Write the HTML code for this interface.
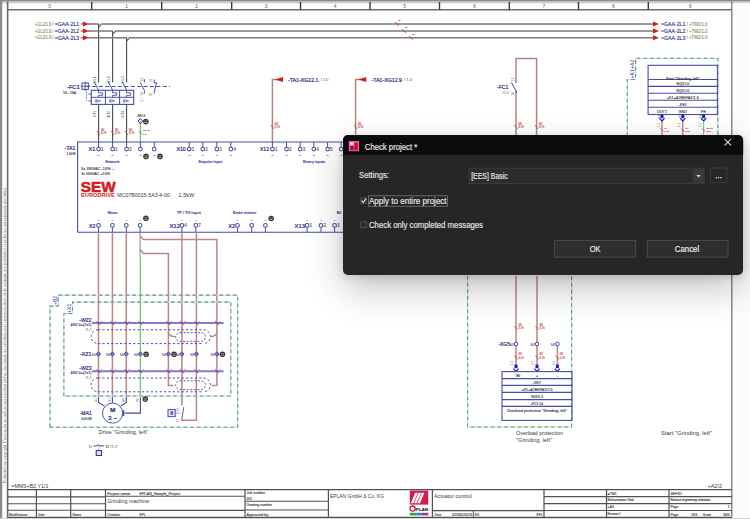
<!DOCTYPE html>
<html><head><meta charset="utf-8"><title>EPLAN Check project</title><style>
html,body{margin:0;padding:0;background:#fff;width:750px;height:519px;overflow:hidden;}
svg{position:absolute;left:0;top:0;}
svg text{font-family:"Liberation Sans",sans-serif;}
#dlg{position:absolute;left:343px;top:135.3px;width:400.2px;height:140.2px;border-radius:5px;background:#262626;box-shadow:0 14px 36px rgba(0,0,0,0.24),0 2px 8px rgba(0,0,0,0.14);}
</style></head>
<body>
<svg width="750" height="519" viewBox="0 0 750 519">
<rect x="0" y="0" width="750" height="1.6" fill="#8a8a8a"/>
<rect x="0" y="1.6" width="750" height="1.7" fill="#cdcdcd"/>
<rect x="0" y="0" width="2.2" height="519" fill="#8a8a8a"/>
<rect x="0" y="517.8" width="750" height="1.2" fill="#d4d4d4"/>
<rect x="732.6" y="3.3" width="17.4" height="514.7" fill="#fcfcfc"/>
<line x1="7.6" y1="9.7" x2="731.8" y2="9.7" stroke="#6e6e6e" stroke-width="1.5" />
<line x1="7.6" y1="1.6" x2="7.6" y2="518" stroke="#6a6a6a" stroke-width="1.6" />
<line x1="731.8" y1="1.6" x2="731.8" y2="517.4" stroke="#666" stroke-width="1.15" />
<line x1="91.7" y1="2" x2="91.7" y2="9.7" stroke="#3a3a3a" stroke-width="1.4" />
<line x1="161.7" y1="2" x2="161.7" y2="9.7" stroke="#3a3a3a" stroke-width="1.4" />
<line x1="231.7" y1="2" x2="231.7" y2="9.7" stroke="#3a3a3a" stroke-width="1.4" />
<line x1="300.5" y1="2" x2="300.5" y2="9.7" stroke="#3a3a3a" stroke-width="1.4" />
<line x1="370" y1="2" x2="370" y2="9.7" stroke="#3a3a3a" stroke-width="1.4" />
<line x1="439.5" y1="2" x2="439.5" y2="9.7" stroke="#3a3a3a" stroke-width="1.4" />
<line x1="509.3" y1="2" x2="509.3" y2="9.7" stroke="#3a3a3a" stroke-width="1.4" />
<line x1="578.5" y1="2" x2="578.5" y2="9.7" stroke="#3a3a3a" stroke-width="1.4" />
<line x1="648.3" y1="2" x2="648.3" y2="9.7" stroke="#3a3a3a" stroke-width="1.4" />
<text x="49.65" y="8" font-size="5" fill="#666" text-anchor="middle" font-weight="normal" >0</text>
<text x="126.69999999999999" y="8" font-size="5" fill="#666" text-anchor="middle" font-weight="normal" >1</text>
<text x="196.7" y="8" font-size="5" fill="#666" text-anchor="middle" font-weight="normal" >2</text>
<text x="266.1" y="8" font-size="5" fill="#666" text-anchor="middle" font-weight="normal" >3</text>
<text x="335.25" y="8" font-size="5" fill="#666" text-anchor="middle" font-weight="normal" >4</text>
<text x="404.75" y="8" font-size="5" fill="#666" text-anchor="middle" font-weight="normal" >5</text>
<text x="474.4" y="8" font-size="5" fill="#666" text-anchor="middle" font-weight="normal" >6</text>
<text x="543.9" y="8" font-size="5" fill="#666" text-anchor="middle" font-weight="normal" >7</text>
<text x="613.4" y="8" font-size="5" fill="#666" text-anchor="middle" font-weight="normal" >8</text>
<text x="690.05" y="8" font-size="5" fill="#666" text-anchor="middle" font-weight="normal" >9</text>
<text transform="translate(5.8,483) rotate(-90)" font-size="3.3" fill="#666" textLength="296" lengthAdjust="spacingAndGlyphs">Protected by copyright. Passing on as well as reproduction of this document, its utilization and communication of its contents are prohibited in as far as not expressly permitted.</text>
<path d="M88,23.9 H98.6 M98.6,27.099999999999998 L101.6,23.9 H653" stroke="#7a7a7a" stroke-width="1.45" fill="none" />
<line x1="98.6" y1="23.9" x2="98.6" y2="82.5" stroke="#4a4a4a" stroke-width="1.1" />
<path d="M83,21.4 L89,23.9 L83,26.4 Z" fill="#d41c1c"/>
<line x1="80.8" y1="23.9" x2="84" y2="23.9" stroke="#d41c1c" stroke-width="1.1" />
<path d="M653,21.4 L659,23.9 L653,26.4 Z" fill="#d41c1c"/>
<text x="53.4" y="25.5" font-size="4.6" fill="#8a9466" text-anchor="end" font-weight="normal" textLength="18.6" lengthAdjust="spacingAndGlyphs" stroke="#8a9466" stroke-width="0.12">+GL2/1.9 /</text>
<text x="54.8" y="25.9" font-size="5.6" fill="#30308a" text-anchor="start" font-weight="normal" textLength="24.4" lengthAdjust="spacingAndGlyphs" stroke="#30308a" stroke-width="0.15">=GAA-2L1</text>
<text x="661" y="25.9" font-size="5.6" fill="#30308a" text-anchor="start" font-weight="normal" textLength="24.4" lengthAdjust="spacingAndGlyphs" stroke="#30308a" stroke-width="0.15">=GAA-2L1</text>
<text x="686.5" y="25.5" font-size="4.6" fill="#8a9466" text-anchor="start" font-weight="normal" textLength="21" lengthAdjust="spacingAndGlyphs" stroke="#8a9466" stroke-width="0.12">/ +TM2/1.0</text>
<path d="M88,31 H112.6 M112.6,34.2 L115.6,31 H653" stroke="#7a7a7a" stroke-width="1.45" fill="none" />
<line x1="112.6" y1="31" x2="112.6" y2="82.5" stroke="#4a4a4a" stroke-width="1.1" />
<path d="M83,28.5 L89,31 L83,33.5 Z" fill="#d41c1c"/>
<line x1="80.8" y1="31" x2="84" y2="31" stroke="#d41c1c" stroke-width="1.1" />
<path d="M653,28.5 L659,31 L653,33.5 Z" fill="#d41c1c"/>
<text x="53.4" y="32.6" font-size="4.6" fill="#8a9466" text-anchor="end" font-weight="normal" textLength="18.6" lengthAdjust="spacingAndGlyphs" stroke="#8a9466" stroke-width="0.12">+GL2/1.9 /</text>
<text x="54.8" y="33" font-size="5.6" fill="#30308a" text-anchor="start" font-weight="normal" textLength="24.4" lengthAdjust="spacingAndGlyphs" stroke="#30308a" stroke-width="0.15">=GAA-2L2</text>
<text x="661" y="33" font-size="5.6" fill="#30308a" text-anchor="start" font-weight="normal" textLength="24.4" lengthAdjust="spacingAndGlyphs" stroke="#30308a" stroke-width="0.15">=GAA-2L2</text>
<text x="686.5" y="32.6" font-size="4.6" fill="#8a9466" text-anchor="start" font-weight="normal" textLength="21" lengthAdjust="spacingAndGlyphs" stroke="#8a9466" stroke-width="0.12">/ +TM2/1.0</text>
<path d="M88,37.8 H126.6 M126.6,41.0 L129.6,37.8 H653" stroke="#7a7a7a" stroke-width="1.45" fill="none" />
<line x1="126.6" y1="37.8" x2="126.6" y2="82.5" stroke="#4a4a4a" stroke-width="1.1" />
<path d="M83,35.3 L89,37.8 L83,40.3 Z" fill="#d41c1c"/>
<line x1="80.8" y1="37.8" x2="84" y2="37.8" stroke="#d41c1c" stroke-width="1.1" />
<path d="M653,35.3 L659,37.8 L653,40.3 Z" fill="#d41c1c"/>
<text x="53.4" y="39.4" font-size="4.6" fill="#8a9466" text-anchor="end" font-weight="normal" textLength="18.6" lengthAdjust="spacingAndGlyphs" stroke="#8a9466" stroke-width="0.12">+GL2/1.9 /</text>
<text x="54.8" y="39.8" font-size="5.6" fill="#30308a" text-anchor="start" font-weight="normal" textLength="24.4" lengthAdjust="spacingAndGlyphs" stroke="#30308a" stroke-width="0.15">=GAA-2L3</text>
<text x="661" y="39.8" font-size="5.6" fill="#30308a" text-anchor="start" font-weight="normal" textLength="24.4" lengthAdjust="spacingAndGlyphs" stroke="#30308a" stroke-width="0.15">=GAA-2L3</text>
<text x="686.5" y="39.4" font-size="4.6" fill="#8a9466" text-anchor="start" font-weight="normal" textLength="21" lengthAdjust="spacingAndGlyphs" stroke="#8a9466" stroke-width="0.12">/ +TM2/1.0</text>
<line x1="395" y1="22.099999999999998" x2="399" y2="25.7" stroke="#c04040" stroke-width="0.9" />
<text x="398" y="20.9" font-size="2.4" fill="#c04848" text-anchor="start" font-weight="normal" stroke="#c04848" stroke-width="0.12">3x</text>
<line x1="402" y1="29.2" x2="406" y2="32.8" stroke="#c04040" stroke-width="0.9" />
<text x="405" y="28" font-size="2.4" fill="#c04848" text-anchor="start" font-weight="normal" stroke="#c04848" stroke-width="0.12">3x</text>
<line x1="409" y1="36.0" x2="413" y2="39.599999999999994" stroke="#c04040" stroke-width="0.9" />
<text x="412" y="34.8" font-size="2.4" fill="#c04848" text-anchor="start" font-weight="normal" stroke="#c04848" stroke-width="0.12">3x</text>
<rect x="91.3" y="90.3" width="42.4" height="14.1" stroke="#4a4aa8" stroke-width="1.1" fill="none" />
<line x1="91.3" y1="97.3" x2="133.7" y2="97.3" stroke="#4a4aa8" stroke-width="1" />
<line x1="105.4" y1="90.3" x2="105.4" y2="104.4" stroke="#4a4aa8" stroke-width="1" />
<line x1="119.6" y1="90.3" x2="119.6" y2="104.4" stroke="#4a4aa8" stroke-width="1" />
<line x1="94.19999999999999" y1="81.9" x2="98.5" y2="89.9" stroke="#3a3a8a" stroke-width="0.9" />
<path d="M98.5,90.3 V92.8 H102.6 V95.3 H98.5 V97.3" stroke="#4a4aa8" stroke-width="0.9" fill="none" />
<path d="M95.6,99.5 V102.3 M96.6,99.6 L100.6,100.9 L96.6,102.2 Z" stroke="#4a4aa8" stroke-width="0.7" fill="none" />
<line x1="98.6" y1="104.4" x2="98.6" y2="142" stroke="#4a4a4a" stroke-width="1.1" />
<line x1="97.0" y1="131" x2="100.19999999999999" y2="135" stroke="#c04040" stroke-width="0.8" />
<text x="101.0" y="130.6" font-size="2.7" fill="#c04848" text-anchor="start" font-weight="normal" stroke="#c04848" stroke-width="0.12">0V</text>
<text x="101.0" y="134.2" font-size="2.7" fill="#c04848" text-anchor="start" font-weight="normal" stroke="#c04848" stroke-width="0.12">0,75</text>
<text transform="translate(96.39999999999999,83) rotate(-90)" font-size="3.4" fill="#444" textLength="6.5" lengthAdjust="spacingAndGlyphs">1/L1</text>
<text transform="translate(96.39999999999999,117.5) rotate(-90)" font-size="3.4" fill="#444" textLength="6.5" lengthAdjust="spacingAndGlyphs">2/T1</text>
<line x1="108.19999999999999" y1="81.9" x2="112.5" y2="89.9" stroke="#3a3a8a" stroke-width="0.9" />
<path d="M112.5,90.3 V92.8 H116.6 V95.3 H112.5 V97.3" stroke="#4a4aa8" stroke-width="0.9" fill="none" />
<path d="M109.6,99.5 V102.3 M110.6,99.6 L114.6,100.9 L110.6,102.2 Z" stroke="#4a4aa8" stroke-width="0.7" fill="none" />
<line x1="112.6" y1="104.4" x2="112.6" y2="142" stroke="#4a4a4a" stroke-width="1.1" />
<line x1="111.0" y1="131" x2="114.19999999999999" y2="135" stroke="#c04040" stroke-width="0.8" />
<text x="115.0" y="130.6" font-size="2.7" fill="#c04848" text-anchor="start" font-weight="normal" stroke="#c04848" stroke-width="0.12">0V</text>
<text x="115.0" y="134.2" font-size="2.7" fill="#c04848" text-anchor="start" font-weight="normal" stroke="#c04848" stroke-width="0.12">0,75</text>
<text transform="translate(110.39999999999999,83) rotate(-90)" font-size="3.4" fill="#444" textLength="6.5" lengthAdjust="spacingAndGlyphs">3/L2</text>
<text transform="translate(110.39999999999999,117.5) rotate(-90)" font-size="3.4" fill="#444" textLength="6.5" lengthAdjust="spacingAndGlyphs">4/T2</text>
<line x1="122.19999999999999" y1="81.9" x2="126.5" y2="89.9" stroke="#3a3a8a" stroke-width="0.9" />
<path d="M126.5,90.3 V92.8 H130.6 V95.3 H126.5 V97.3" stroke="#4a4aa8" stroke-width="0.9" fill="none" />
<path d="M123.6,99.5 V102.3 M124.6,99.6 L128.6,100.9 L124.6,102.2 Z" stroke="#4a4aa8" stroke-width="0.7" fill="none" />
<line x1="126.6" y1="104.4" x2="126.6" y2="142" stroke="#4a4a4a" stroke-width="1.1" />
<line x1="125.0" y1="131" x2="128.2" y2="135" stroke="#c04040" stroke-width="0.8" />
<text x="129.0" y="130.6" font-size="2.7" fill="#c04848" text-anchor="start" font-weight="normal" stroke="#c04848" stroke-width="0.12">0V</text>
<text x="129.0" y="134.2" font-size="2.7" fill="#c04848" text-anchor="start" font-weight="normal" stroke="#c04848" stroke-width="0.12">0,75</text>
<text transform="translate(124.39999999999999,83) rotate(-90)" font-size="3.4" fill="#444" textLength="6.5" lengthAdjust="spacingAndGlyphs">5/L3</text>
<text transform="translate(124.39999999999999,117.5) rotate(-90)" font-size="3.4" fill="#444" textLength="6.5" lengthAdjust="spacingAndGlyphs">6/T3</text>
<path d="M86,86.5 H170" stroke="#4a4aa8" stroke-width="1" fill="none" stroke-dasharray="4,2.4"/>
<path d="M88.5,94 H91 M88.5,101 H91" stroke="#4a4aa8" stroke-width="0.9" fill="none" />
<path d="M86.5,89 V101" stroke="#4a4aa8" stroke-width="0.8" fill="none" stroke-dasharray="1.4,1.2"/>
<rect x="82" y="83" width="6.4" height="6.4" stroke="#4a4aa8" stroke-width="1" fill="none" />
<line x1="85.2" y1="81.5" x2="85.2" y2="90.8" stroke="#4a4aa8" stroke-width="0.9" />
<line x1="80.6" y1="86.2" x2="89.8" y2="86.2" stroke="#4a4aa8" stroke-width="0.9" />
<text x="79.6" y="88.6" font-size="5.4" fill="#30308a" text-anchor="end" font-weight="normal" textLength="12.6" lengthAdjust="spacingAndGlyphs" stroke="#30308a" stroke-width="0.22">-FC1</text>
<text x="76" y="93.6" font-size="3.2" fill="#3a3a3a" text-anchor="end" font-weight="normal" textLength="13" lengthAdjust="spacingAndGlyphs" stroke="#3a3a3a" stroke-width="0.12">10...16A</text>
<path d="M144.4,79.2 V82.5 M140.2,82.3 L144.4,90.3 M144.4,90.5 V93.5" stroke="#3a3a8a" stroke-width="0.9" fill="none" />
<path d="M154.3,79.5 V83 M156.6,82.5 L154.3,91.5 M154.3,91.5 V93.5 M154.3,83 L156.6,83" stroke="#3a3a8a" stroke-width="0.9" fill="none" />
<text transform="translate(142.8,81) rotate(-90)" font-size="2.8" fill="#555">13</text>
<text transform="translate(142.8,95.5) rotate(-90)" font-size="2.8" fill="#555">14</text>
<text transform="translate(151.5,82) rotate(-90)" font-size="2.8" fill="#555">21</text>
<text transform="translate(151.5,96) rotate(-90)" font-size="2.8" fill="#555">22</text>
<text transform="translate(143,102) rotate(-90)" font-size="3" fill="#8a9466">/1.7</text>
<line x1="140.4" y1="121.5" x2="140.4" y2="142" stroke="#7cc47c" stroke-width="1.4" />
<path d="M140.4,118.6 l2.3,2.5 l-2.3,2.5 l-2.3,-2.5 z" stroke="#30308a" stroke-width="1" fill="none" />
<circle cx="145.8" cy="121.6" r="2.8" fill="#3a3a3a"/><path d="M144.3,121.0 h0.9 M146.3,121.0 h1 M144.60000000000002,122.6 H147.0" stroke="#e8e8e8" stroke-width="0.7"/>
<text x="137" y="116.8" font-size="2.8" fill="#3a3a3a" text-anchor="start" font-weight="normal" textLength="8" lengthAdjust="spacingAndGlyphs" stroke="#3a3a3a" stroke-width="0.12">-WE1.6</text>
<line x1="138.8" y1="131.6" x2="142" y2="134.4" stroke="#c04040" stroke-width="0.8" />
<text x="143" y="131.4" font-size="2.3" fill="#c04848" text-anchor="start" font-weight="normal" stroke="#c04848" stroke-width="0.12">GNYE</text>
<text x="143" y="134.6" font-size="2.3" fill="#c04848" text-anchor="start" font-weight="normal" stroke="#c04848" stroke-width="0.12">1,5</text>
<path d="M272.4,142 V79.4 H281" stroke="#b88282" stroke-width="1.5" fill="none" />
<path d="M275,79.4 L283,76.9 L283,81.9 Z" fill="#d41c1c"/>
<text x="288" y="81.5" font-size="5.4" fill="#30308a" text-anchor="start" font-weight="normal" textLength="30.4" lengthAdjust="spacingAndGlyphs" stroke="#30308a" stroke-width="0.22">-TA1-XG12.1</text>
<text x="320.4" y="81.2" font-size="3.8" fill="#8a9466" text-anchor="start" font-weight="normal" textLength="8" lengthAdjust="spacingAndGlyphs" stroke="#8a9466" stroke-width="0.12">/ 1.0</text>
<line x1="270.79999999999995" y1="125" x2="274.0" y2="129" stroke="#c04040" stroke-width="0.8" />
<text x="274.79999999999995" y="124.6" font-size="2.7" fill="#c04848" text-anchor="start" font-weight="normal" stroke="#c04848" stroke-width="0.12">0V</text>
<text x="274.79999999999995" y="128.2" font-size="2.7" fill="#c04848" text-anchor="start" font-weight="normal" stroke="#c04848" stroke-width="0.12">0,75</text>
<path d="M355.6,136 V79.4 H364" stroke="#b88282" stroke-width="1.5" fill="none" />
<path d="M358.2,79.4 L366.2,76.9 L366.2,81.9 Z" fill="#d41c1c"/>
<text x="371.6" y="81.5" font-size="5.4" fill="#30308a" text-anchor="start" font-weight="normal" textLength="30.4" lengthAdjust="spacingAndGlyphs" stroke="#30308a" stroke-width="0.22">-TA1-XG12.9</text>
<text x="404" y="81.2" font-size="3.8" fill="#8a9466" text-anchor="start" font-weight="normal" textLength="8" lengthAdjust="spacingAndGlyphs" stroke="#8a9466" stroke-width="0.12">/ 1.0</text>
<line x1="354.0" y1="125" x2="357.20000000000005" y2="129" stroke="#c04040" stroke-width="0.8" />
<text x="358.0" y="124.6" font-size="2.7" fill="#c04848" text-anchor="start" font-weight="normal" stroke="#c04848" stroke-width="0.12">0V</text>
<text x="358.0" y="128.2" font-size="2.7" fill="#c04848" text-anchor="start" font-weight="normal" stroke="#c04848" stroke-width="0.12">0,75</text>
<path d="M516,136 V91.5 M516,80 V58.4 H536.6 V136" stroke="#b88282" stroke-width="1.5" fill="none" />
<path d="M516,80 V82.8 M516,91.5 V93" stroke="#4a4aa8" stroke-width="1.1" fill="none" />
<line x1="511.4" y1="82.4" x2="516.6" y2="91.8" stroke="#3a3a8a" stroke-width="0.95" />
<text x="508.4" y="88.8" font-size="5.4" fill="#30308a" text-anchor="end" font-weight="normal" textLength="11.4" lengthAdjust="spacingAndGlyphs" stroke="#30308a" stroke-width="0.22">-FC1</text>
<text x="508.4" y="93.8" font-size="3.2" fill="#999" text-anchor="end" font-weight="normal" textLength="6" lengthAdjust="spacingAndGlyphs" stroke="#999" stroke-width="0.12">2L3</text>
<text transform="translate(513.6,81) rotate(-90)" font-size="3" fill="#555">13</text>
<text transform="translate(513.6,95.4) rotate(-90)" font-size="3" fill="#555">14</text>
<line x1="514.4" y1="125" x2="517.6" y2="129" stroke="#c04040" stroke-width="0.8" />
<text x="518.4" y="124.6" font-size="2.7" fill="#c04848" text-anchor="start" font-weight="normal" stroke="#c04848" stroke-width="0.12">0V</text>
<text x="518.4" y="128.2" font-size="2.7" fill="#c04848" text-anchor="start" font-weight="normal" stroke="#c04848" stroke-width="0.12">0,75</text>
<line x1="535.0" y1="125" x2="538.2" y2="129" stroke="#c04040" stroke-width="0.8" />
<text x="539.0" y="124.6" font-size="2.7" fill="#c04848" text-anchor="start" font-weight="normal" stroke="#c04848" stroke-width="0.12">0V</text>
<text x="539.0" y="128.2" font-size="2.7" fill="#c04848" text-anchor="start" font-weight="normal" stroke="#c04848" stroke-width="0.12">0,75</text>
<path d="M77.6,232.2 V142 H345 M77.6,232.2 H345" stroke="#4a4aa8" stroke-width="1.1" fill="none" />
<text x="75.4" y="149.6" font-size="5.4" fill="#30308a" text-anchor="end" font-weight="normal" textLength="11" lengthAdjust="spacingAndGlyphs" stroke="#30308a" stroke-width="0.22">-TA1</text>
<text x="75.4" y="154.6" font-size="3.4" fill="#3a3a3a" text-anchor="end" font-weight="normal" textLength="9" lengthAdjust="spacingAndGlyphs" stroke="#3a3a3a" stroke-width="0.12">1,5kW</text>
<line x1="98.6" y1="142" x2="98.6" y2="147.2" stroke="#4a4aa8" stroke-width="1" />
<circle cx="98.6" cy="149.1" r="1.85" stroke="#4a4aa8" stroke-width="1.05" fill="#fff"/>
<text x="101.1" y="151" font-size="4.6" fill="#555" text-anchor="start" font-weight="normal" stroke="#555" stroke-width="0.12">1</text>
<text x="98.6" y="155.6" font-size="1.8" fill="#4a4aa8" text-anchor="middle" font-weight="normal" stroke="#4a4aa8" stroke-width="0.12">L1</text>
<line x1="112.6" y1="142" x2="112.6" y2="147.2" stroke="#4a4aa8" stroke-width="1" />
<circle cx="112.6" cy="149.1" r="1.85" stroke="#4a4aa8" stroke-width="1.05" fill="#fff"/>
<text x="115.1" y="151" font-size="4.6" fill="#555" text-anchor="start" font-weight="normal" stroke="#555" stroke-width="0.12">2</text>
<text x="112.6" y="155.6" font-size="1.8" fill="#4a4aa8" text-anchor="middle" font-weight="normal" stroke="#4a4aa8" stroke-width="0.12">L1</text>
<line x1="126.6" y1="142" x2="126.6" y2="147.2" stroke="#4a4aa8" stroke-width="1" />
<circle cx="126.6" cy="149.1" r="1.85" stroke="#4a4aa8" stroke-width="1.05" fill="#fff"/>
<text x="129.1" y="151" font-size="4.6" fill="#555" text-anchor="start" font-weight="normal" stroke="#555" stroke-width="0.12">3</text>
<text x="126.6" y="155.6" font-size="1.8" fill="#4a4aa8" text-anchor="middle" font-weight="normal" stroke="#4a4aa8" stroke-width="0.12">L1</text>
<line x1="140.4" y1="142" x2="140.4" y2="147.2" stroke="#4a4aa8" stroke-width="1" />
<circle cx="140.4" cy="149.1" r="1.85" stroke="#4a4aa8" stroke-width="1.05" fill="#fff"/>
<text x="140.4" y="155.6" font-size="1.8" fill="#4a4aa8" text-anchor="middle" font-weight="normal" stroke="#4a4aa8" stroke-width="0.12">L1</text>
<line x1="154.2" y1="142" x2="154.2" y2="147.2" stroke="#4a4aa8" stroke-width="1" />
<circle cx="154.2" cy="149.1" r="1.85" stroke="#4a4aa8" stroke-width="1.05" fill="#fff"/>
<text x="154.2" y="155.6" font-size="1.8" fill="#4a4aa8" text-anchor="middle" font-weight="normal" stroke="#4a4aa8" stroke-width="0.12">L1</text>
<line x1="189.2" y1="142" x2="189.2" y2="147.2" stroke="#4a4aa8" stroke-width="1" />
<circle cx="189.2" cy="149.1" r="1.85" stroke="#4a4aa8" stroke-width="1.05" fill="#fff"/>
<text x="191.7" y="151" font-size="4.6" fill="#555" text-anchor="start" font-weight="normal" stroke="#555" stroke-width="0.12">1</text>
<text x="189.2" y="155.6" font-size="1.8" fill="#4a4aa8" text-anchor="middle" font-weight="normal" stroke="#4a4aa8" stroke-width="0.12">L1</text>
<line x1="202.8" y1="142" x2="202.8" y2="147.2" stroke="#4a4aa8" stroke-width="1" />
<circle cx="202.8" cy="149.1" r="1.85" stroke="#4a4aa8" stroke-width="1.05" fill="#fff"/>
<text x="205.3" y="151" font-size="4.6" fill="#555" text-anchor="start" font-weight="normal" stroke="#555" stroke-width="0.12">2</text>
<text x="202.8" y="155.6" font-size="1.8" fill="#4a4aa8" text-anchor="middle" font-weight="normal" stroke="#4a4aa8" stroke-width="0.12">L1</text>
<line x1="216.8" y1="142" x2="216.8" y2="147.2" stroke="#4a4aa8" stroke-width="1" />
<circle cx="216.8" cy="149.1" r="1.85" stroke="#4a4aa8" stroke-width="1.05" fill="#fff"/>
<text x="219.3" y="151" font-size="4.6" fill="#555" text-anchor="start" font-weight="normal" stroke="#555" stroke-width="0.12">3</text>
<text x="216.8" y="155.6" font-size="1.8" fill="#4a4aa8" text-anchor="middle" font-weight="normal" stroke="#4a4aa8" stroke-width="0.12">L1</text>
<line x1="230.9" y1="142" x2="230.9" y2="147.2" stroke="#4a4aa8" stroke-width="1" />
<circle cx="230.9" cy="149.1" r="1.85" stroke="#4a4aa8" stroke-width="1.05" fill="#fff"/>
<text x="233.4" y="151" font-size="4.6" fill="#555" text-anchor="start" font-weight="normal" stroke="#555" stroke-width="0.12">4</text>
<text x="230.9" y="155.6" font-size="1.8" fill="#4a4aa8" text-anchor="middle" font-weight="normal" stroke="#4a4aa8" stroke-width="0.12">L1</text>
<line x1="272.4" y1="142" x2="272.4" y2="147.2" stroke="#4a4aa8" stroke-width="1" />
<circle cx="272.4" cy="149.1" r="1.85" stroke="#4a4aa8" stroke-width="1.05" fill="#fff"/>
<text x="274.9" y="151" font-size="4.6" fill="#555" text-anchor="start" font-weight="normal" stroke="#555" stroke-width="0.12">1</text>
<text x="272.4" y="155.6" font-size="1.8" fill="#4a4aa8" text-anchor="middle" font-weight="normal" stroke="#4a4aa8" stroke-width="0.12">L1</text>
<line x1="286.5" y1="142" x2="286.5" y2="147.2" stroke="#4a4aa8" stroke-width="1" />
<circle cx="286.5" cy="149.1" r="1.85" stroke="#4a4aa8" stroke-width="1.05" fill="#fff"/>
<text x="289.0" y="151" font-size="4.6" fill="#555" text-anchor="start" font-weight="normal" stroke="#555" stroke-width="0.12">2</text>
<text x="286.5" y="155.6" font-size="1.8" fill="#4a4aa8" text-anchor="middle" font-weight="normal" stroke="#4a4aa8" stroke-width="0.12">L1</text>
<line x1="300.2" y1="142" x2="300.2" y2="147.2" stroke="#4a4aa8" stroke-width="1" />
<circle cx="300.2" cy="149.1" r="1.85" stroke="#4a4aa8" stroke-width="1.05" fill="#fff"/>
<text x="302.7" y="151" font-size="4.6" fill="#555" text-anchor="start" font-weight="normal" stroke="#555" stroke-width="0.12">3</text>
<text x="300.2" y="155.6" font-size="1.8" fill="#4a4aa8" text-anchor="middle" font-weight="normal" stroke="#4a4aa8" stroke-width="0.12">L1</text>
<line x1="313.8" y1="142" x2="313.8" y2="147.2" stroke="#4a4aa8" stroke-width="1" />
<circle cx="313.8" cy="149.1" r="1.85" stroke="#4a4aa8" stroke-width="1.05" fill="#fff"/>
<text x="316.3" y="151" font-size="4.6" fill="#555" text-anchor="start" font-weight="normal" stroke="#555" stroke-width="0.12">4</text>
<text x="313.8" y="155.6" font-size="1.8" fill="#4a4aa8" text-anchor="middle" font-weight="normal" stroke="#4a4aa8" stroke-width="0.12">L1</text>
<line x1="327.6" y1="142" x2="327.6" y2="147.2" stroke="#4a4aa8" stroke-width="1" />
<circle cx="327.6" cy="149.1" r="1.85" stroke="#4a4aa8" stroke-width="1.05" fill="#fff"/>
<text x="330.1" y="151" font-size="4.6" fill="#555" text-anchor="start" font-weight="normal" stroke="#555" stroke-width="0.12">5</text>
<text x="327.6" y="155.6" font-size="1.8" fill="#4a4aa8" text-anchor="middle" font-weight="normal" stroke="#4a4aa8" stroke-width="0.12">L1</text>
<line x1="341.2" y1="142" x2="341.2" y2="147.2" stroke="#4a4aa8" stroke-width="1" />
<circle cx="341.2" cy="149.1" r="1.85" stroke="#4a4aa8" stroke-width="1.05" fill="#fff"/>
<text x="343.7" y="151" font-size="4.6" fill="#555" text-anchor="start" font-weight="normal" stroke="#555" stroke-width="0.12">6</text>
<text x="341.2" y="155.6" font-size="1.8" fill="#4a4aa8" text-anchor="middle" font-weight="normal" stroke="#4a4aa8" stroke-width="0.12">L1</text>
<text x="95.5" y="151.2" font-size="5.3" fill="#30308a" text-anchor="end" font-weight="normal" textLength="7" lengthAdjust="spacingAndGlyphs" stroke="#30308a" stroke-width="0.22">X1</text>
<text x="185.8" y="151.2" font-size="5.3" fill="#30308a" text-anchor="end" font-weight="normal" textLength="9.4" lengthAdjust="spacingAndGlyphs" stroke="#30308a" stroke-width="0.22">X10</text>
<text x="269" y="151.2" font-size="5.3" fill="#30308a" text-anchor="end" font-weight="normal" textLength="9" lengthAdjust="spacingAndGlyphs" stroke="#30308a" stroke-width="0.22">X12</text>
<text x="112.4" y="162.5" font-size="4.3" fill="#4a4aa8" text-anchor="middle" font-weight="bold" textLength="14.2" lengthAdjust="spacingAndGlyphs" stroke="#4a4aa8" stroke-width="0.12">Network</text>
<text x="210.2" y="162.5" font-size="4.3" fill="#4a4aa8" text-anchor="middle" font-weight="bold" textLength="24" lengthAdjust="spacingAndGlyphs" stroke="#4a4aa8" stroke-width="0.12">Setpoint input</text>
<text x="314.1" y="162.5" font-size="4.3" fill="#4a4aa8" text-anchor="middle" font-weight="bold" textLength="22.2" lengthAdjust="spacingAndGlyphs" stroke="#4a4aa8" stroke-width="0.12">Binary inputs</text>
<text x="81" y="170.4" font-size="4" fill="#3a3a3a" text-anchor="start" font-weight="normal" textLength="34" lengthAdjust="spacingAndGlyphs" stroke="#3a3a3a" stroke-width="0.12">3x 380VAC -10% ...</text>
<text x="81" y="174.9" font-size="4" fill="#3a3a3a" text-anchor="start" font-weight="normal" textLength="29" lengthAdjust="spacingAndGlyphs" stroke="#3a3a3a" stroke-width="0.12">3x 500VAC +10%</text>
<text x="80.8" y="192" font-size="15.2" font-weight="bold" fill="#d41c1c" textLength="34.8" lengthAdjust="spacingAndGlyphs" stroke="#d41c1c" stroke-width="0.6">SEW</text>
<text x="81" y="197.2" font-size="4.8" font-weight="bold" fill="#d41c1c" textLength="33.8" lengthAdjust="spacingAndGlyphs">EURODRIVE</text>
<text x="117.3" y="197.2" font-size="6.2" fill="#3a3a3a" text-anchor="start" font-weight="normal" textLength="52.6" lengthAdjust="spacingAndGlyphs" >MC07B0015-5A3-4-00</text>
<text x="178.6" y="197.2" font-size="6.2" fill="#3a3a3a" text-anchor="start" font-weight="normal" textLength="15.6" lengthAdjust="spacingAndGlyphs" >1,5kW</text>
<circle cx="146" cy="156.4" r="2.8" fill="#3a3a3a"/><path d="M144.5,155.8 h0.9 M146.5,155.8 h1 M144.8,157.4 H147.2" stroke="#e8e8e8" stroke-width="0.7"/>
<circle cx="160" cy="156.4" r="2.8" fill="#3a3a3a"/><path d="M158.5,155.8 h0.9 M160.5,155.8 h1 M158.8,157.4 H161.2" stroke="#e8e8e8" stroke-width="0.7"/>
<circle cx="145.9" cy="218.3" r="2.8" fill="#3a3a3a"/><path d="M144.4,217.70000000000002 h0.9 M146.4,217.70000000000002 h1 M144.70000000000002,219.3 H147.1" stroke="#e8e8e8" stroke-width="0.7"/>
<circle cx="271.2" cy="218.5" r="2.8" fill="#3a3a3a"/><path d="M269.7,217.9 h0.9 M271.7,217.9 h1 M270.0,219.5 H272.4" stroke="#e8e8e8" stroke-width="0.7"/>
<line x1="98.5" y1="232.2" x2="98.5" y2="227.3" stroke="#4a4aa8" stroke-width="1" />
<circle cx="98.5" cy="225.4" r="1.85" stroke="#4a4aa8" stroke-width="1.05" fill="#fff"/>
<text x="98.5" y="221.4" font-size="1.8" fill="#4a4aa8" text-anchor="middle" font-weight="normal" stroke="#4a4aa8" stroke-width="0.12">U</text>
<line x1="112.4" y1="232.2" x2="112.4" y2="227.3" stroke="#4a4aa8" stroke-width="1" />
<circle cx="112.4" cy="225.4" r="1.85" stroke="#4a4aa8" stroke-width="1.05" fill="#fff"/>
<text x="112.4" y="221.4" font-size="1.8" fill="#4a4aa8" text-anchor="middle" font-weight="normal" stroke="#4a4aa8" stroke-width="0.12">U</text>
<line x1="126.3" y1="232.2" x2="126.3" y2="227.3" stroke="#4a4aa8" stroke-width="1" />
<circle cx="126.3" cy="225.4" r="1.85" stroke="#4a4aa8" stroke-width="1.05" fill="#fff"/>
<text x="126.3" y="221.4" font-size="1.8" fill="#4a4aa8" text-anchor="middle" font-weight="normal" stroke="#4a4aa8" stroke-width="0.12">U</text>
<line x1="140.1" y1="232.2" x2="140.1" y2="227.3" stroke="#4a4aa8" stroke-width="1" />
<circle cx="140.1" cy="225.4" r="1.85" stroke="#4a4aa8" stroke-width="1.05" fill="#fff"/>
<text x="140.1" y="221.4" font-size="1.8" fill="#4a4aa8" text-anchor="middle" font-weight="normal" stroke="#4a4aa8" stroke-width="0.12">U</text>
<line x1="181.9" y1="232.2" x2="181.9" y2="227.3" stroke="#4a4aa8" stroke-width="1" />
<circle cx="181.9" cy="225.4" r="1.85" stroke="#4a4aa8" stroke-width="1.05" fill="#fff"/>
<text x="181.9" y="221.4" font-size="1.8" fill="#4a4aa8" text-anchor="middle" font-weight="normal" stroke="#4a4aa8" stroke-width="0.12">U</text>
<line x1="195.8" y1="232.2" x2="195.8" y2="227.3" stroke="#4a4aa8" stroke-width="1" />
<circle cx="195.8" cy="225.4" r="1.85" stroke="#4a4aa8" stroke-width="1.05" fill="#fff"/>
<text x="195.8" y="221.4" font-size="1.8" fill="#4a4aa8" text-anchor="middle" font-weight="normal" stroke="#4a4aa8" stroke-width="0.12">U</text>
<line x1="237.5" y1="232.2" x2="237.5" y2="227.3" stroke="#4a4aa8" stroke-width="1" />
<circle cx="237.5" cy="225.4" r="1.85" stroke="#4a4aa8" stroke-width="1.05" fill="#fff"/>
<text x="237.5" y="221.4" font-size="1.8" fill="#4a4aa8" text-anchor="middle" font-weight="normal" stroke="#4a4aa8" stroke-width="0.12">U</text>
<line x1="251.7" y1="232.2" x2="251.7" y2="227.3" stroke="#4a4aa8" stroke-width="1" />
<circle cx="251.7" cy="225.4" r="1.85" stroke="#4a4aa8" stroke-width="1.05" fill="#fff"/>
<text x="251.7" y="221.4" font-size="1.8" fill="#4a4aa8" text-anchor="middle" font-weight="normal" stroke="#4a4aa8" stroke-width="0.12">U</text>
<line x1="265.4" y1="232.2" x2="265.4" y2="227.3" stroke="#4a4aa8" stroke-width="1" />
<circle cx="265.4" cy="225.4" r="1.85" stroke="#4a4aa8" stroke-width="1.05" fill="#fff"/>
<text x="265.4" y="221.4" font-size="1.8" fill="#4a4aa8" text-anchor="middle" font-weight="normal" stroke="#4a4aa8" stroke-width="0.12">U</text>
<line x1="307.1" y1="232.2" x2="307.1" y2="227.3" stroke="#4a4aa8" stroke-width="1" />
<circle cx="307.1" cy="225.4" r="1.85" stroke="#4a4aa8" stroke-width="1.05" fill="#fff"/>
<text x="307.1" y="221.4" font-size="1.8" fill="#4a4aa8" text-anchor="middle" font-weight="normal" stroke="#4a4aa8" stroke-width="0.12">U</text>
<line x1="321" y1="232.2" x2="321" y2="227.3" stroke="#4a4aa8" stroke-width="1" />
<circle cx="321" cy="225.4" r="1.85" stroke="#4a4aa8" stroke-width="1.05" fill="#fff"/>
<text x="321" y="221.4" font-size="1.8" fill="#4a4aa8" text-anchor="middle" font-weight="normal" stroke="#4a4aa8" stroke-width="0.12">U</text>
<line x1="334.6" y1="232.2" x2="334.6" y2="227.3" stroke="#4a4aa8" stroke-width="1" />
<circle cx="334.6" cy="225.4" r="1.85" stroke="#4a4aa8" stroke-width="1.05" fill="#fff"/>
<text x="334.6" y="221.4" font-size="1.8" fill="#4a4aa8" text-anchor="middle" font-weight="normal" stroke="#4a4aa8" stroke-width="0.12">U</text>
<text x="95.5" y="227.6" font-size="5.3" fill="#30308a" text-anchor="end" font-weight="normal" textLength="6.5" lengthAdjust="spacingAndGlyphs" stroke="#30308a" stroke-width="0.22">X2</text>
<text x="180" y="227.6" font-size="5.3" fill="#30308a" text-anchor="end" font-weight="normal" textLength="10.6" lengthAdjust="spacingAndGlyphs" stroke="#30308a" stroke-width="0.22">X12</text>
<text x="235.2" y="227.6" font-size="5.3" fill="#30308a" text-anchor="end" font-weight="normal" textLength="7" lengthAdjust="spacingAndGlyphs" stroke="#30308a" stroke-width="0.22">X2</text>
<text x="305" y="227.6" font-size="5.3" fill="#30308a" text-anchor="end" font-weight="normal" textLength="10.4" lengthAdjust="spacingAndGlyphs" stroke="#30308a" stroke-width="0.22">X13</text>
<text x="184.3" y="227.4" font-size="4.6" fill="#555" text-anchor="start" font-weight="normal" stroke="#555" stroke-width="0.12">4</text>
<text x="198.2" y="227.4" font-size="4.6" fill="#555" text-anchor="start" font-weight="normal" stroke="#555" stroke-width="0.12">7</text>
<text x="309.6" y="227.4" font-size="4.6" fill="#555" text-anchor="start" font-weight="normal" stroke="#555" stroke-width="0.12">1</text>
<text x="323.5" y="227.4" font-size="4.6" fill="#555" text-anchor="start" font-weight="normal" stroke="#555" stroke-width="0.12">2</text>
<text x="337.1" y="227.4" font-size="4.6" fill="#555" text-anchor="start" font-weight="normal" stroke="#555" stroke-width="0.12">3</text>
<text x="112.7" y="214.4" font-size="4.3" fill="#4a4aa8" text-anchor="middle" font-weight="bold" textLength="10" lengthAdjust="spacingAndGlyphs" stroke="#4a4aa8" stroke-width="0.12">Motor</text>
<text x="188.9" y="214.4" font-size="4.3" fill="#4a4aa8" text-anchor="middle" font-weight="bold" textLength="23.8" lengthAdjust="spacingAndGlyphs" stroke="#4a4aa8" stroke-width="0.12">TP / TH input</text>
<text x="244.7" y="214.4" font-size="4.3" fill="#4a4aa8" text-anchor="middle" font-weight="bold" textLength="23.4" lengthAdjust="spacingAndGlyphs" stroke="#4a4aa8" stroke-width="0.12">Brake resistor</text>
<text x="336.8" y="214.4" font-size="4.3" fill="#4a4aa8" text-anchor="start" font-weight="bold" stroke="#4a4aa8" stroke-width="0.12">Bi</text>
<line x1="98.5" y1="232.2" x2="98.5" y2="397" stroke="#bb8686" stroke-width="1.5" />
<line x1="112.4" y1="232.2" x2="112.4" y2="397" stroke="#bb8686" stroke-width="1.5" />
<line x1="126.3" y1="232.2" x2="126.3" y2="397" stroke="#bb8686" stroke-width="1.5" />
<line x1="140.1" y1="232.2" x2="140.1" y2="257" stroke="#888" stroke-width="1" />
<path d="M140.1,236 L143.4,239.4 H216.9 V385.4 H211.5" stroke="#bb8686" stroke-width="1.5" fill="none" />
<path d="M140.1,249.5 L143.4,253.4 H168.4 V385.4 H173.5" stroke="#bb8686" stroke-width="1.5" fill="none" />
<line x1="140.4" y1="257" x2="140.4" y2="398" stroke="#7cc47c" stroke-width="1.4" />
<path d="M140.4,398 V413.1 H124.6" stroke="#4a4aa8" stroke-width="1.1" fill="none" />
<path d="M123.4,410.2 V416" stroke="#4a4aa8" stroke-width="1.8"/>
<path d="M181.9,232.2 V405.5 M181.9,418.5 V420.3 H196.4 V232.2" stroke="#bb8686" stroke-width="1.5" fill="none" />
<path d="M183.8,407 L181.9,418.5" stroke="#4a4aa8" stroke-width="0.9" fill="none" />
<path d="M176,413 H181" stroke="#4a4aa8" stroke-width="0.8" fill="none" stroke-dasharray="1.2,1"/>
<rect x="168" y="409.6" width="7.2" height="7" stroke="#4a4aa8" stroke-width="1" fill="#e6e6f8" />
<text x="171.6" y="415.2" font-size="5.2" fill="#30308a" text-anchor="middle" font-weight="normal" stroke="#30308a" stroke-width="0.22">θ</text>
<text transform="translate(178.6,411) rotate(-90)" font-size="2.8" fill="#555">11</text>
<text transform="translate(178.6,422) rotate(-90)" font-size="2.8" fill="#555">12</text>
<path d="M50,427.2 V306.1 H58.2 V295.1 H237.7 V427.2 Z" stroke="#cfe5df" stroke-width="1.25" fill="none" />
<path d="M50,427.2 V306.1 H58.2 V295.1 H237.7 V427.2 Z" stroke="#5e968a" stroke-width="1.05" fill="none" stroke-dasharray="3.6,3.1"/>
<path d="M63.9,396 V313.5 H72.5 V302.1 H230.8 V396 Z" stroke="#cfe5df" stroke-width="1.25" fill="none" />
<path d="M63.9,396 V313.5 H72.5 V302.1 H230.8 V396 Z" stroke="#5e968a" stroke-width="1.05" fill="none" stroke-dasharray="3.6,3.1"/>
<text transform="translate(56.8,305) rotate(-90)" font-size="4.6" fill="#30308a" textLength="9" lengthAdjust="spacingAndGlyphs">+B2</text>
<text transform="translate(70.8,313) rotate(-90)" font-size="4.6" fill="#30308a" textLength="9.5" lengthAdjust="spacingAndGlyphs">+X1</text>
<line x1="92" y1="323" x2="223.6" y2="323" stroke="#8878d0" stroke-width="1.9" />
<text x="91.6" y="321.6" font-size="5.6" fill="#30308a" text-anchor="end" font-weight="normal" textLength="12.4" lengthAdjust="spacingAndGlyphs" stroke="#30308a" stroke-width="0.22">-WZ2</text>
<text x="91.6" y="325.8" font-size="3.3" fill="#30308a" text-anchor="end" font-weight="normal" textLength="21" lengthAdjust="spacingAndGlyphs" stroke="#30308a" stroke-width="0.12">4G2,5+(2x1)</text>
<text x="91.6" y="330.6" font-size="3.3" fill="#8a9466" text-anchor="end" font-weight="normal" textLength="6" lengthAdjust="spacingAndGlyphs" stroke="#8a9466" stroke-width="0.12">/1.2</text>
<path d="M98,329.8 H203.5 M98,343.6 H203.5 M98,329.8 A6.9,6.9 0 0 0 98,343.6 M203.5,329.8 A6.9,6.9 0 0 1 203.5,343.6" stroke="#4848b0" stroke-width="1" fill="none" stroke-dasharray="2.2,2.2"/>
<path d="M180,332.6 H201 A4.4,4.4 0 0 1 201,341.4 H180 A4.4,4.4 0 0 1 180,332.6" stroke="#4848b0" stroke-width="0.9" fill="none" stroke-dasharray="2,1.6"/>
<line x1="96.8" y1="321.3" x2="100.2" y2="324.7" stroke="#902050" stroke-width="1" />
<text x="100.9" y="322.1" font-size="2.2" fill="#c04848" text-anchor="start" font-weight="normal" stroke="#c04848" stroke-width="0.12">1</text>
<line x1="110.7" y1="321.3" x2="114.10000000000001" y2="324.7" stroke="#902050" stroke-width="1" />
<text x="114.80000000000001" y="322.1" font-size="2.2" fill="#c04848" text-anchor="start" font-weight="normal" stroke="#c04848" stroke-width="0.12">1</text>
<line x1="124.6" y1="321.3" x2="128.0" y2="324.7" stroke="#902050" stroke-width="1" />
<text x="128.7" y="322.1" font-size="2.2" fill="#c04848" text-anchor="start" font-weight="normal" stroke="#c04848" stroke-width="0.12">1</text>
<line x1="138.70000000000002" y1="321.3" x2="142.1" y2="324.7" stroke="#902050" stroke-width="1" />
<text x="142.8" y="322.1" font-size="2.2" fill="#c04848" text-anchor="start" font-weight="normal" stroke="#c04848" stroke-width="0.12">1</text>
<line x1="166.70000000000002" y1="321.3" x2="170.1" y2="324.7" stroke="#902050" stroke-width="1" />
<text x="170.8" y="322.1" font-size="2.2" fill="#c04848" text-anchor="start" font-weight="normal" stroke="#c04848" stroke-width="0.12">1</text>
<line x1="180.20000000000002" y1="321.3" x2="183.6" y2="324.7" stroke="#902050" stroke-width="1" />
<text x="184.3" y="322.1" font-size="2.2" fill="#c04848" text-anchor="start" font-weight="normal" stroke="#c04848" stroke-width="0.12">1</text>
<line x1="194.70000000000002" y1="321.3" x2="198.1" y2="324.7" stroke="#902050" stroke-width="1" />
<text x="198.8" y="322.1" font-size="2.2" fill="#c04848" text-anchor="start" font-weight="normal" stroke="#c04848" stroke-width="0.12">1</text>
<line x1="215.20000000000002" y1="321.3" x2="218.6" y2="324.7" stroke="#902050" stroke-width="1" />
<text x="219.3" y="322.1" font-size="2.2" fill="#c04848" text-anchor="start" font-weight="normal" stroke="#c04848" stroke-width="0.12">1</text>
<path d="M168.4,331.5 Q168.4,336.6 175,336.6 M216.9,331.5 Q216.9,336.6 210.5,336.6" stroke="#bb8686" stroke-width="1.4" fill="none" />
<line x1="92" y1="371.2" x2="223.6" y2="371.2" stroke="#8878d0" stroke-width="1.9" />
<text x="91.6" y="369.8" font-size="5.6" fill="#30308a" text-anchor="end" font-weight="normal" textLength="12.4" lengthAdjust="spacingAndGlyphs" stroke="#30308a" stroke-width="0.22">-WZ3</text>
<text x="91.6" y="374.0" font-size="3.3" fill="#30308a" text-anchor="end" font-weight="normal" textLength="21" lengthAdjust="spacingAndGlyphs" stroke="#30308a" stroke-width="0.12">4G2,5+(2x1)</text>
<text x="91.6" y="378.8" font-size="3.3" fill="#8a9466" text-anchor="end" font-weight="normal" textLength="6" lengthAdjust="spacingAndGlyphs" stroke="#8a9466" stroke-width="0.12">/1.2</text>
<path d="M98,378.0 H203.5 M98,391.8 H203.5 M98,378.0 A6.9,6.9 0 0 0 98,391.8 M203.5,378.0 A6.9,6.9 0 0 1 203.5,391.8" stroke="#4848b0" stroke-width="1" fill="none" stroke-dasharray="2.2,2.2"/>
<path d="M180,380.8 H201 A4.4,4.4 0 0 1 201,389.59999999999997 H180 A4.4,4.4 0 0 1 180,380.8" stroke="#4848b0" stroke-width="0.9" fill="none" stroke-dasharray="2,1.6"/>
<line x1="96.8" y1="369.5" x2="100.2" y2="372.9" stroke="#902050" stroke-width="1" />
<text x="100.9" y="370.3" font-size="2.2" fill="#c04848" text-anchor="start" font-weight="normal" stroke="#c04848" stroke-width="0.12">1</text>
<line x1="110.7" y1="369.5" x2="114.10000000000001" y2="372.9" stroke="#902050" stroke-width="1" />
<text x="114.80000000000001" y="370.3" font-size="2.2" fill="#c04848" text-anchor="start" font-weight="normal" stroke="#c04848" stroke-width="0.12">1</text>
<line x1="124.6" y1="369.5" x2="128.0" y2="372.9" stroke="#902050" stroke-width="1" />
<text x="128.7" y="370.3" font-size="2.2" fill="#c04848" text-anchor="start" font-weight="normal" stroke="#c04848" stroke-width="0.12">1</text>
<line x1="138.70000000000002" y1="369.5" x2="142.1" y2="372.9" stroke="#902050" stroke-width="1" />
<text x="142.8" y="370.3" font-size="2.2" fill="#c04848" text-anchor="start" font-weight="normal" stroke="#c04848" stroke-width="0.12">1</text>
<line x1="166.70000000000002" y1="369.5" x2="170.1" y2="372.9" stroke="#902050" stroke-width="1" />
<text x="170.8" y="370.3" font-size="2.2" fill="#c04848" text-anchor="start" font-weight="normal" stroke="#c04848" stroke-width="0.12">1</text>
<line x1="180.20000000000002" y1="369.5" x2="183.6" y2="372.9" stroke="#902050" stroke-width="1" />
<text x="184.3" y="370.3" font-size="2.2" fill="#c04848" text-anchor="start" font-weight="normal" stroke="#c04848" stroke-width="0.12">1</text>
<line x1="194.70000000000002" y1="369.5" x2="198.1" y2="372.9" stroke="#902050" stroke-width="1" />
<text x="198.8" y="370.3" font-size="2.2" fill="#c04848" text-anchor="start" font-weight="normal" stroke="#c04848" stroke-width="0.12">1</text>
<line x1="215.20000000000002" y1="369.5" x2="218.6" y2="372.9" stroke="#902050" stroke-width="1" />
<text x="219.3" y="370.3" font-size="2.2" fill="#c04848" text-anchor="start" font-weight="normal" stroke="#c04848" stroke-width="0.12">1</text>
<text x="91.6" y="356" font-size="5.4" fill="#30308a" text-anchor="end" font-weight="normal" textLength="11.6" lengthAdjust="spacingAndGlyphs" stroke="#30308a" stroke-width="0.22">-XZ1</text>
<path d="M98.5,351.8 L100.6,354 L98.5,356.2 L96.4,354 Z" fill="#8080c8" stroke="#3838a0" stroke-width="0.9"/>
<text x="96.3" y="355.6" font-size="3.4" fill="#666" text-anchor="end" font-weight="normal" textLength="4.2" lengthAdjust="spacingAndGlyphs" stroke="#666" stroke-width="0.12">50</text>
<path d="M112.4,351.8 L114.5,354 L112.4,356.2 L110.30000000000001,354 Z" fill="#8080c8" stroke="#3838a0" stroke-width="0.9"/>
<text x="110.2" y="355.6" font-size="3.4" fill="#666" text-anchor="end" font-weight="normal" textLength="4.2" lengthAdjust="spacingAndGlyphs" stroke="#666" stroke-width="0.12">50</text>
<path d="M126.3,351.8 L128.4,354 L126.3,356.2 L124.2,354 Z" fill="#8080c8" stroke="#3838a0" stroke-width="0.9"/>
<text x="124.1" y="355.6" font-size="3.4" fill="#666" text-anchor="end" font-weight="normal" textLength="4.2" lengthAdjust="spacingAndGlyphs" stroke="#666" stroke-width="0.12">50</text>
<path d="M140.4,351.8 L142.5,354 L140.4,356.2 L138.3,354 Z" fill="#8080c8" stroke="#3838a0" stroke-width="0.9"/>
<text x="138.20000000000002" y="355.6" font-size="3.4" fill="#666" text-anchor="end" font-weight="normal" textLength="4.2" lengthAdjust="spacingAndGlyphs" stroke="#666" stroke-width="0.12">50</text>
<path d="M168.4,351.8 L170.5,354 L168.4,356.2 L166.3,354 Z" fill="#8080c8" stroke="#3838a0" stroke-width="0.9"/>
<text x="166.20000000000002" y="355.6" font-size="3.4" fill="#666" text-anchor="end" font-weight="normal" textLength="4.2" lengthAdjust="spacingAndGlyphs" stroke="#666" stroke-width="0.12">50</text>
<path d="M181.9,351.8 L184.0,354 L181.9,356.2 L179.8,354 Z" fill="#8080c8" stroke="#3838a0" stroke-width="0.9"/>
<text x="179.70000000000002" y="355.6" font-size="3.4" fill="#666" text-anchor="end" font-weight="normal" textLength="4.2" lengthAdjust="spacingAndGlyphs" stroke="#666" stroke-width="0.12">50</text>
<path d="M196.4,351.8 L198.5,354 L196.4,356.2 L194.3,354 Z" fill="#8080c8" stroke="#3838a0" stroke-width="0.9"/>
<text x="194.20000000000002" y="355.6" font-size="3.4" fill="#666" text-anchor="end" font-weight="normal" textLength="4.2" lengthAdjust="spacingAndGlyphs" stroke="#666" stroke-width="0.12">50</text>
<path d="M216.9,351.8 L219.0,354 L216.9,356.2 L214.8,354 Z" fill="#8080c8" stroke="#3838a0" stroke-width="0.9"/>
<text x="214.70000000000002" y="355.6" font-size="3.4" fill="#666" text-anchor="end" font-weight="normal" textLength="4.2" lengthAdjust="spacingAndGlyphs" stroke="#666" stroke-width="0.12">50</text>
<circle cx="146.1" cy="354.2" r="2.8" fill="#3a3a3a"/><path d="M144.6,353.59999999999997 h0.9 M146.6,353.59999999999997 h1 M144.9,355.2 H147.29999999999998" stroke="#e8e8e8" stroke-width="0.7"/>
<circle cx="174" cy="354.2" r="2.8" fill="#3a3a3a"/><path d="M172.5,353.59999999999997 h0.9 M174.5,353.59999999999997 h1 M172.8,355.2 H175.2" stroke="#e8e8e8" stroke-width="0.7"/>
<circle cx="222.4" cy="354.2" r="2.8" fill="#3a3a3a"/><path d="M220.9,353.59999999999997 h0.9 M222.9,353.59999999999997 h1 M221.20000000000002,355.2 H223.6" stroke="#e8e8e8" stroke-width="0.7"/>
<circle cx="112.6" cy="413.1" r="10.1" stroke="#5656a6" stroke-width="1.0" fill="#fff"/>
<text x="112.6" y="412" font-size="6.2" fill="#30308a" text-anchor="middle" font-weight="bold" textLength="5.4" lengthAdjust="spacingAndGlyphs" stroke="#30308a" stroke-width="0.22">M</text>
<text x="112.6" y="420.4" font-size="5.4" fill="#30308a" text-anchor="middle" font-weight="normal" textLength="9" lengthAdjust="spacingAndGlyphs" stroke="#30308a" stroke-width="0.22">3 ~</text>
<path d="M98.5,397 V402.5 L104.3,406" stroke="#4a4aa8" stroke-width="1.1" fill="none" />
<path d="M112.4,397 V403" stroke="#4a4aa8" stroke-width="1.1" fill="none" />
<path d="M126.3,397 V402.5 L120.9,406" stroke="#4a4aa8" stroke-width="1.1" fill="none" />
<text transform="translate(97.1,402) rotate(-90)" font-size="3.2" fill="#666" textLength="4" lengthAdjust="spacingAndGlyphs">U1</text>
<text transform="translate(111.0,402) rotate(-90)" font-size="3.2" fill="#666" textLength="4" lengthAdjust="spacingAndGlyphs">V1</text>
<text transform="translate(124.89999999999999,402) rotate(-90)" font-size="3.2" fill="#666" textLength="4" lengthAdjust="spacingAndGlyphs">W1</text>
<text transform="translate(139.0,402) rotate(-90)" font-size="3.2" fill="#666" textLength="4" lengthAdjust="spacingAndGlyphs">PE</text>
<circle cx="145.3" cy="399.1" r="2.8" fill="#3a3a3a"/><path d="M143.8,398.5 h0.9 M145.8,398.5 h1 M144.10000000000002,400.1 H146.5" stroke="#e8e8e8" stroke-width="0.7"/>
<text x="91.6" y="415.4" font-size="5.4" fill="#30308a" text-anchor="end" font-weight="normal" textLength="11.6" lengthAdjust="spacingAndGlyphs" stroke="#30308a" stroke-width="0.22">-MA1</text>
<text x="91.6" y="420.4" font-size="3.2" fill="#3a3a3a" text-anchor="end" font-weight="normal" textLength="10.4" lengthAdjust="spacingAndGlyphs" stroke="#3a3a3a" stroke-width="0.12">0,55 kW</text>
<text x="98.7" y="434.2" font-size="5" fill="#3a3a3a" text-anchor="start" font-weight="normal" textLength="49.5" lengthAdjust="spacingAndGlyphs" >Drive "Grinding, left"</text>
<text x="92.2" y="447.6" font-size="3.6" fill="#777" text-anchor="end" font-weight="normal" textLength="3.6" lengthAdjust="spacingAndGlyphs" stroke="#777" stroke-width="0.12">11</text>
<path d="M93.6,446 H96 L98.8,444.6 M98.6,445.8 H104" stroke="#30308a" stroke-width="0.9" fill="none" />
<text x="105.4" y="447.8" font-size="3.8" fill="#3a3a3a" text-anchor="start" font-weight="normal" textLength="3.8" lengthAdjust="spacingAndGlyphs" stroke="#3a3a3a" stroke-width="0.12">12</text>
<text x="110.6" y="447.8" font-size="3.8" fill="#8a9466" text-anchor="start" font-weight="normal" textLength="7" lengthAdjust="spacingAndGlyphs" stroke="#8a9466" stroke-width="0.12">/1.2</text>
<rect x="96.2" y="450.5" width="5.4" height="5" stroke="#30308a" stroke-width="1" fill="#d8d8f0" />
<line x1="99" y1="446.5" x2="99" y2="450.2" stroke="#30308a" stroke-width="0.6" stroke-dasharray="0.8,0.6"/>
<path d="M467.6,276 V427 H571.6 V276" stroke="#cfe5df" stroke-width="1.25" fill="none" />
<path d="M467.6,276 V427 H571.6 V276" stroke="#5e968a" stroke-width="1.05" fill="none" stroke-dasharray="3.6,3.1"/>
<line x1="516" y1="276" x2="516" y2="368" stroke="#bb8686" stroke-width="1.5" />
<line x1="514.4" y1="326" x2="517.6" y2="330" stroke="#c04040" stroke-width="0.8" />
<text x="518.4" y="325.6" font-size="2.7" fill="#c04848" text-anchor="start" font-weight="normal" stroke="#c04848" stroke-width="0.12">0V</text>
<text x="518.4" y="329.2" font-size="2.7" fill="#c04848" text-anchor="start" font-weight="normal" stroke="#c04848" stroke-width="0.12">0,75</text>
<line x1="537" y1="276" x2="537" y2="368" stroke="#bb8686" stroke-width="1.5" />
<line x1="535.4" y1="326" x2="538.6" y2="330" stroke="#c04040" stroke-width="0.8" />
<text x="539.4" y="325.6" font-size="2.7" fill="#c04848" text-anchor="start" font-weight="normal" stroke="#c04848" stroke-width="0.12">0V</text>
<text x="539.4" y="329.2" font-size="2.7" fill="#c04848" text-anchor="start" font-weight="normal" stroke="#c04848" stroke-width="0.12">0,75</text>
<line x1="557.4" y1="344" x2="557.4" y2="368" stroke="#bb8686" stroke-width="1.5" />
<circle cx="516" cy="344" r="1.8" stroke="#4a4aa8" stroke-width="1" fill="#fff"/>
<text x="513.6" y="345.6" font-size="3.4" fill="#666" text-anchor="end" font-weight="normal" textLength="4.2" lengthAdjust="spacingAndGlyphs" stroke="#666" stroke-width="0.12">50</text>
<line x1="514.4" y1="355.5" x2="517.6" y2="359.5" stroke="#c04040" stroke-width="0.8" />
<text x="518.4" y="355.1" font-size="2.7" fill="#c04848" text-anchor="start" font-weight="normal" stroke="#c04848" stroke-width="0.12">0V</text>
<text x="518.4" y="358.7" font-size="2.7" fill="#c04848" text-anchor="start" font-weight="normal" stroke="#c04848" stroke-width="0.12">0,75</text>
<text transform="translate(513.4,365) rotate(-90)" font-size="2.8" fill="#555">1.1</text>
<path d="M513.4,368.6 L516,371.4 L518.6,368.6" stroke="#1c1cc0" stroke-width="1.2" fill="none"/>
<rect x="514.5" y="364.6" width="3" height="3.6" fill="#1c1cc0"/>
<circle cx="537" cy="344" r="1.8" stroke="#4a4aa8" stroke-width="1" fill="#fff"/>
<text x="534.6" y="345.6" font-size="3.4" fill="#666" text-anchor="end" font-weight="normal" textLength="4.2" lengthAdjust="spacingAndGlyphs" stroke="#666" stroke-width="0.12">50</text>
<line x1="535.4" y1="355.5" x2="538.6" y2="359.5" stroke="#c04040" stroke-width="0.8" />
<text x="539.4" y="355.1" font-size="2.7" fill="#c04848" text-anchor="start" font-weight="normal" stroke="#c04848" stroke-width="0.12">0V</text>
<text x="539.4" y="358.7" font-size="2.7" fill="#c04848" text-anchor="start" font-weight="normal" stroke="#c04848" stroke-width="0.12">0,75</text>
<text transform="translate(534.4,365) rotate(-90)" font-size="2.8" fill="#555">2.1</text>
<path d="M534.4,368.6 L537,371.4 L539.6,368.6" stroke="#1c1cc0" stroke-width="1.2" fill="none"/>
<rect x="535.5" y="364.6" width="3" height="3.6" fill="#1c1cc0"/>
<circle cx="557.4" cy="344" r="1.8" stroke="#4a4aa8" stroke-width="1" fill="#fff"/>
<text x="555.0" y="345.6" font-size="3.4" fill="#666" text-anchor="end" font-weight="normal" textLength="4.2" lengthAdjust="spacingAndGlyphs" stroke="#666" stroke-width="0.12">50</text>
<line x1="555.8" y1="355.5" x2="559.0" y2="359.5" stroke="#c04040" stroke-width="0.8" />
<text x="559.8" y="355.1" font-size="2.7" fill="#c04848" text-anchor="start" font-weight="normal" stroke="#c04848" stroke-width="0.12">0V</text>
<text x="559.8" y="358.7" font-size="2.7" fill="#c04848" text-anchor="start" font-weight="normal" stroke="#c04848" stroke-width="0.12">0,75</text>
<text transform="translate(554.8,365) rotate(-90)" font-size="2.8" fill="#555">3.1</text>
<path d="M554.8,368.6 L557.4,371.4 L560.0,368.6" stroke="#1c1cc0" stroke-width="1.2" fill="none"/>
<rect x="555.9" y="364.6" width="3" height="3.6" fill="#1c1cc0"/>
<text x="510" y="346" font-size="5.4" fill="#30308a" text-anchor="end" font-weight="normal" textLength="11.6" lengthAdjust="spacingAndGlyphs" stroke="#30308a" stroke-width="0.22">-XG5</text>
<rect x="502" y="371.6" width="70" height="48.8" stroke="#4a4aa8" stroke-width="1.1" fill="none" />
<line x1="502" y1="378.6" x2="572" y2="378.6" stroke="#4a4aa8" stroke-width="1.1" />
<line x1="502" y1="385.4" x2="572" y2="385.4" stroke="#4a4aa8" stroke-width="1.1" />
<line x1="502" y1="392.4" x2="572" y2="392.4" stroke="#4a4aa8" stroke-width="1.1" />
<line x1="502" y1="399.6" x2="572" y2="399.6" stroke="#4a4aa8" stroke-width="1.1" />
<line x1="502" y1="406.4" x2="572" y2="406.4" stroke="#4a4aa8" stroke-width="1.1" />
<text x="518" y="377.2" font-size="3" fill="#3a3a3a" text-anchor="middle" font-weight="normal" stroke="#3a3a3a" stroke-width="0.12">BN</text>
<text x="537" y="377.2" font-size="3" fill="#3a3a3a" text-anchor="middle" font-weight="normal" stroke="#3a3a3a" stroke-width="0.12">+</text>
<text x="557.4" y="377.2" font-size="3" fill="#3a3a3a" text-anchor="middle" font-weight="normal" stroke="#3a3a3a" stroke-width="0.12">-</text>
<text x="537" y="384.2" font-size="3.3" fill="#3a3a3a" text-anchor="middle" font-weight="normal" textLength="8" lengthAdjust="spacingAndGlyphs" stroke="#3a3a3a" stroke-width="0.12">-KE2</text>
<text x="537" y="391.2" font-size="3.3" fill="#3a3a3a" text-anchor="middle" font-weight="normal" textLength="31" lengthAdjust="spacingAndGlyphs" stroke="#3a3a3a" stroke-width="0.12">+K1+A2BEPA1/2.5</text>
<text x="537" y="398.2" font-size="3.3" fill="#3a3a3a" text-anchor="middle" font-weight="normal" textLength="12" lengthAdjust="spacingAndGlyphs" stroke="#3a3a3a" stroke-width="0.12">%IX3.3</text>
<text x="537" y="405.2" font-size="3.3" fill="#3a3a3a" text-anchor="middle" font-weight="normal" textLength="12" lengthAdjust="spacingAndGlyphs" stroke="#3a3a3a" stroke-width="0.12">-FC1:14</text>
<text x="537" y="412.4" font-size="3.3" fill="#3a3a3a" text-anchor="middle" font-weight="normal" textLength="60" lengthAdjust="spacingAndGlyphs" stroke="#3a3a3a" stroke-width="0.12">Overload protection "Grinding, left"</text>
<text x="516" y="434.6" font-size="5" fill="#3a3a3a" text-anchor="start" font-weight="normal" textLength="47" lengthAdjust="spacingAndGlyphs" >Overload protection</text>
<text x="516" y="441.6" font-size="5" fill="#3a3a3a" text-anchor="start" font-weight="normal" textLength="36" lengthAdjust="spacingAndGlyphs" >"Grinding, left"</text>
<text x="661" y="434.6" font-size="5" fill="#3a3a3a" text-anchor="start" font-weight="normal" textLength="51" lengthAdjust="spacingAndGlyphs" >Start "Grinding, left"</text>
<path d="M627.3,136 V79.5 H635.6 V58.3 H717.9 V136" stroke="#cfe5df" stroke-width="1.25" fill="none" />
<path d="M627.3,136 V79.5 H635.6 V58.3 H717.9 V136" stroke="#5e968a" stroke-width="1.05" fill="none" stroke-dasharray="3.6,3.1"/>
<text transform="translate(634.4,78.6) rotate(-90)" font-size="5" fill="#30308a" textLength="19" lengthAdjust="spacingAndGlyphs">+K1+A2</text>
<rect x="648.1" y="65.3" width="69.3" height="49.2" stroke="#4a4aa8" stroke-width="1.1" fill="none" />
<line x1="648.1" y1="79.5" x2="717.4" y2="79.5" stroke="#4a4aa8" stroke-width="1.1" />
<line x1="648.1" y1="86.4" x2="717.4" y2="86.4" stroke="#4a4aa8" stroke-width="1.1" />
<line x1="648.1" y1="93.3" x2="717.4" y2="93.3" stroke="#4a4aa8" stroke-width="1.1" />
<line x1="648.1" y1="100.3" x2="717.4" y2="100.3" stroke="#4a4aa8" stroke-width="1.1" />
<line x1="648.1" y1="107.2" x2="717.4" y2="107.2" stroke="#4a4aa8" stroke-width="1.1" />
<text x="682.8" y="79.6" font-size="3.4" fill="#3a3a3a" text-anchor="middle" font-weight="normal" textLength="34" lengthAdjust="spacingAndGlyphs" stroke="#3a3a3a" stroke-width="0.12">Start "Grinding, left"</text>
<text x="682.8" y="84.8" font-size="3.4" fill="#3a3a3a" text-anchor="middle" font-weight="normal" textLength="13" lengthAdjust="spacingAndGlyphs" stroke="#3a3a3a" stroke-width="0.12">%QX2.0</text>
<text x="682.8" y="91.8" font-size="3.4" fill="#3a3a3a" text-anchor="middle" font-weight="normal" textLength="13" lengthAdjust="spacingAndGlyphs" stroke="#3a3a3a" stroke-width="0.12">%QX2.0</text>
<text x="682.8" y="98.8" font-size="3.4" fill="#3a3a3a" text-anchor="middle" font-weight="normal" textLength="32" lengthAdjust="spacingAndGlyphs" stroke="#3a3a3a" stroke-width="0.12">+K1+A2BEPA1/1.5</text>
<text x="682.8" y="105.8" font-size="3.4" fill="#3a3a3a" text-anchor="middle" font-weight="normal" textLength="8" lengthAdjust="spacingAndGlyphs" stroke="#3a3a3a" stroke-width="0.12">-KE1</text>
<text x="662" y="112.8" font-size="3.4" fill="#3a3a3a" text-anchor="middle" font-weight="normal" textLength="10" lengthAdjust="spacingAndGlyphs" stroke="#3a3a3a" stroke-width="0.12">OUT1</text>
<rect x="660.5" y="114.6" width="3" height="3.6" fill="#1c1cc0"/>
<path d="M659.4,118.2 L662,121 L664.6,118.2" stroke="#1c1cc0" stroke-width="1.2" fill="none"/>
<line x1="662" y1="121" x2="662" y2="136" stroke="#a86060" stroke-width="1.1" />
<text transform="translate(659.6,127) rotate(-90)" font-size="2.8" fill="#555">1.1</text>
<text x="658" y="117.6" font-size="3" fill="#555" text-anchor="start" font-weight="normal" stroke="#555" stroke-width="0.12">2</text>
<line x1="660.5" y1="128.4" x2="663.5" y2="131.4" stroke="#c04040" stroke-width="0.8" />
<text x="664.6" y="128.8" font-size="2.3" fill="#c04848" text-anchor="start" font-weight="normal" stroke="#c04848" stroke-width="0.12">0V</text>
<text x="664.6" y="132" font-size="2.3" fill="#c04848" text-anchor="start" font-weight="normal" stroke="#c04848" stroke-width="0.12">0,75</text>
<text x="682.8" y="112.8" font-size="3.4" fill="#3a3a3a" text-anchor="middle" font-weight="normal" textLength="8" lengthAdjust="spacingAndGlyphs" stroke="#3a3a3a" stroke-width="0.12">GND</text>
<rect x="681.3" y="114.6" width="3" height="3.6" fill="#1c1cc0"/>
<path d="M680.1999999999999,118.2 L682.8,121 L685.4,118.2" stroke="#1c1cc0" stroke-width="1.2" fill="none"/>
<line x1="682.8" y1="121" x2="682.8" y2="136" stroke="#a86060" stroke-width="1.1" />
<text transform="translate(680.4,127) rotate(-90)" font-size="2.8" fill="#555">1.1</text>
<text x="678.8" y="117.6" font-size="3" fill="#555" text-anchor="start" font-weight="normal" stroke="#555" stroke-width="0.12">2</text>
<line x1="681.3" y1="128.4" x2="684.3" y2="131.4" stroke="#c04040" stroke-width="0.8" />
<text x="685.4" y="128.8" font-size="2.3" fill="#c04848" text-anchor="start" font-weight="normal" stroke="#c04848" stroke-width="0.12">0V</text>
<text x="685.4" y="132" font-size="2.3" fill="#c04848" text-anchor="start" font-weight="normal" stroke="#c04848" stroke-width="0.12">0,75</text>
<text x="703.6" y="112.8" font-size="3.4" fill="#3a3a3a" text-anchor="middle" font-weight="normal" textLength="5" lengthAdjust="spacingAndGlyphs" stroke="#3a3a3a" stroke-width="0.12">PE</text>
<rect x="702.1" y="114.6" width="3" height="3.6" fill="#1c1cc0"/>
<path d="M701.0,118.2 L703.6,121 L706.2,118.2" stroke="#1c1cc0" stroke-width="1.2" fill="none"/>
<line x1="703.6" y1="121" x2="703.6" y2="136" stroke="#7cc47c" stroke-width="1.1" />
<text transform="translate(701.2,127) rotate(-90)" font-size="2.8" fill="#555">1.1</text>
<text x="699.6" y="117.6" font-size="3" fill="#555" text-anchor="start" font-weight="normal" stroke="#555" stroke-width="0.12">2</text>
<line x1="702.1" y1="128.4" x2="705.1" y2="131.4" stroke="#c04040" stroke-width="0.8" />
<text x="706.2" y="128.8" font-size="2.3" fill="#c04848" text-anchor="start" font-weight="normal" stroke="#c04848" stroke-width="0.12">GNYE</text>
<text x="706.2" y="132" font-size="2.3" fill="#c04848" text-anchor="start" font-weight="normal" stroke="#c04848" stroke-width="0.12">0,75</text>
<line x1="7.6" y1="489.6" x2="731.8" y2="489.6" stroke="#505050" stroke-width="1.3" />
<line x1="7.6" y1="517.3" x2="731.8" y2="517.3" stroke="#505050" stroke-width="1.3" />
<line x1="36.4" y1="489.6" x2="36.4" y2="517.4" stroke="#505050" stroke-width="1.2" />
<line x1="70.7" y1="489.6" x2="70.7" y2="517.4" stroke="#505050" stroke-width="1.2" />
<line x1="105.5" y1="489.6" x2="105.5" y2="517.4" stroke="#505050" stroke-width="1.2" />
<line x1="245" y1="489.6" x2="245" y2="517.4" stroke="#505050" stroke-width="1.2" />
<line x1="328.4" y1="489.6" x2="328.4" y2="517.4" stroke="#505050" stroke-width="1.2" />
<line x1="432.4" y1="489.6" x2="432.4" y2="517.4" stroke="#505050" stroke-width="1.2" />
<line x1="544" y1="489.6" x2="544" y2="517.4" stroke="#505050" stroke-width="1.2" />
<line x1="606.5" y1="489.6" x2="606.5" y2="517.4" stroke="#505050" stroke-width="1.2" />
<line x1="669" y1="489.6" x2="669" y2="517.4" stroke="#505050" stroke-width="1.2" />
<line x1="7.6" y1="496.9" x2="105.7" y2="496.9" stroke="#505050" stroke-width="1.1" />
<line x1="7.6" y1="503.8" x2="105.7" y2="503.8" stroke="#505050" stroke-width="1.1" />
<line x1="7.6" y1="510.2" x2="105.7" y2="510.2" stroke="#505050" stroke-width="1.1" />
<line x1="105.7" y1="496.2" x2="245" y2="496.2" stroke="#505050" stroke-width="1.1" />
<line x1="105.7" y1="510.4" x2="245" y2="510.4" stroke="#505050" stroke-width="1.1" />
<line x1="245" y1="501.3" x2="328.4" y2="501.3" stroke="#505050" stroke-width="1.1" />
<line x1="245" y1="510" x2="328.4" y2="510" stroke="#505050" stroke-width="1.1" />
<line x1="432.4" y1="510.6" x2="544.2" y2="510.6" stroke="#505050" stroke-width="1.1" />
<line x1="473.3" y1="510.6" x2="473.3" y2="517.4" stroke="#505050" stroke-width="1" />
<line x1="544" y1="496.6" x2="731.8" y2="496.6" stroke="#505050" stroke-width="1.1" />
<line x1="544" y1="503.6" x2="731.8" y2="503.6" stroke="#505050" stroke-width="1.1" />
<line x1="544" y1="510.5" x2="731.8" y2="510.5" stroke="#505050" stroke-width="1.1" />
<text x="11.3" y="488" font-size="5.6" fill="#3a3a3a" text-anchor="start" font-weight="normal" textLength="37.2" lengthAdjust="spacingAndGlyphs" >=MM3+B2.Y1/1</text>
<text x="707.5" y="488.2" font-size="5.8" fill="#3a3a3a" text-anchor="start" font-weight="normal" textLength="14.5" lengthAdjust="spacingAndGlyphs" >+A2/2</text>
<text x="9" y="515.8" font-size="3.8" fill="#3a3a3a" text-anchor="start" font-weight="normal" textLength="18.5" lengthAdjust="spacingAndGlyphs" stroke="#3a3a3a" stroke-width="0.12">Modification</text>
<text x="38" y="515.8" font-size="3.8" fill="#3a3a3a" text-anchor="start" font-weight="normal" textLength="6.5" lengthAdjust="spacingAndGlyphs" stroke="#3a3a3a" stroke-width="0.12">Date</text>
<text x="72.6" y="515.8" font-size="3.8" fill="#3a3a3a" text-anchor="start" font-weight="normal" textLength="8.4" lengthAdjust="spacingAndGlyphs" stroke="#3a3a3a" stroke-width="0.12">Name</text>
<text x="107.2" y="494.8" font-size="3.8" fill="#3a3a3a" text-anchor="start" font-weight="normal" textLength="23" lengthAdjust="spacingAndGlyphs" stroke="#3a3a3a" stroke-width="0.12">Project name</text>
<text x="139.4" y="494.8" font-size="3.8" fill="#3a3a3a" text-anchor="start" font-weight="normal" textLength="40.6" lengthAdjust="spacingAndGlyphs" stroke="#3a3a3a" stroke-width="0.12">EPLAN_Sample_Project</text>
<text x="107.2" y="503.2" font-size="6.2" fill="#3a3a3a" text-anchor="start" font-weight="normal" textLength="42" lengthAdjust="spacingAndGlyphs" >Grinding machine</text>
<text x="107.2" y="515.8" font-size="3.8" fill="#3a3a3a" text-anchor="start" font-weight="normal" textLength="13.2" lengthAdjust="spacingAndGlyphs" stroke="#3a3a3a" stroke-width="0.12">Creator</text>
<text x="139.4" y="515.8" font-size="3.8" fill="#3a3a3a" text-anchor="start" font-weight="normal" textLength="6.4" lengthAdjust="spacingAndGlyphs" stroke="#3a3a3a" stroke-width="0.12">EPL</text>
<text x="246.6" y="494.4" font-size="3.6" fill="#3a3a3a" text-anchor="start" font-weight="normal" textLength="18.6" lengthAdjust="spacingAndGlyphs" stroke="#3a3a3a" stroke-width="0.12">Job number</text>
<text x="246.6" y="499.8" font-size="3.6" fill="#3a3a3a" text-anchor="start" font-weight="normal" textLength="5.4" lengthAdjust="spacingAndGlyphs" stroke="#3a3a3a" stroke-width="0.12">001</text>
<text x="246.6" y="505.8" font-size="3.6" fill="#3a3a3a" text-anchor="start" font-weight="normal" textLength="25.4" lengthAdjust="spacingAndGlyphs" stroke="#3a3a3a" stroke-width="0.12">Drawing number</text>
<text x="246.6" y="515.6" font-size="3.6" fill="#3a3a3a" text-anchor="start" font-weight="normal" textLength="21.8" lengthAdjust="spacingAndGlyphs" stroke="#3a3a3a" stroke-width="0.12">Approved by</text>
<text x="330" y="497.8" font-size="6" fill="#3a3a3a" text-anchor="start" font-weight="normal" textLength="54" lengthAdjust="spacingAndGlyphs" >EPLAN GmbH &amp; Co. KG</text>
<rect x="409.8" y="490.6" width="18.4" height="14" fill="#d8174b"/>
<path d="M415.2,492.8 L417.8,492.8 L413.4,503.2 L410.8,503.2 Z" fill="#fff"/>
<path d="M418.5,492.8 L421.1,492.8 L416.7,503.2 L414.1,503.2 Z" fill="#fff"/>
<path d="M421.8,492.8 L424.40000000000003,492.8 L420.0,503.2 L417.40000000000003,503.2 Z" fill="#fff"/>
<circle cx="412.6" cy="508.6" r="2.6" fill="none" stroke="#d8174b" stroke-width="1.3"/>
<text x="415.6" y="510.8" font-size="4.2" fill="#222" text-anchor="start" font-weight="bold" textLength="12.6" lengthAdjust="spacingAndGlyphs" stroke="#222" stroke-width="0.12">PLAN</text>
<rect x="409.8" y="512.8" width="7" height="2.6" fill="#2aa04a"/><rect x="416.8" y="512.8" width="5" height="2.6" fill="#3a7ac8"/><rect x="421.8" y="512.8" width="3" height="2.6" fill="#7a3aa8"/><rect x="424.8" y="512.8" width="3.4" height="2.6" fill="#d02060"/>
<text x="434" y="497.6" font-size="6" fill="#3a3a3a" text-anchor="start" font-weight="normal" textLength="37.6" lengthAdjust="spacingAndGlyphs" >Actuator control</text>
<text x="434.6" y="515.8" font-size="3.6" fill="#3a3a3a" text-anchor="start" font-weight="normal" textLength="6.6" lengthAdjust="spacingAndGlyphs" stroke="#3a3a3a" stroke-width="0.12">Date</text>
<text x="452" y="515.8" font-size="3.6" fill="#3a3a3a" text-anchor="start" font-weight="normal" textLength="20" lengthAdjust="spacingAndGlyphs" stroke="#3a3a3a" stroke-width="0.12">02/05/2023</text>
<text x="474.8" y="515.8" font-size="3.6" fill="#3a3a3a" text-anchor="start" font-weight="normal" textLength="5" lengthAdjust="spacingAndGlyphs" stroke="#3a3a3a" stroke-width="0.12">EIL</text>
<text x="536.4" y="515.8" font-size="3.6" fill="#3a3a3a" text-anchor="start" font-weight="normal" textLength="6.4" lengthAdjust="spacingAndGlyphs" stroke="#3a3a3a" stroke-width="0.12">EPL</text>
<text x="607.6" y="494.8" font-size="3.6" fill="#3a3a3a" text-anchor="start" font-weight="normal" textLength="9" lengthAdjust="spacingAndGlyphs" stroke="#3a3a3a" stroke-width="0.12">=TM1</text>
<text x="607.6" y="501.4" font-size="2.6" fill="#3a3a3a" text-anchor="start" font-weight="normal" textLength="26" lengthAdjust="spacingAndGlyphs" stroke="#3a3a3a" stroke-width="0.12">Work acceptance: Detail</text>
<text x="607.6" y="508.2" font-size="3.6" fill="#3a3a3a" text-anchor="start" font-weight="normal" textLength="6.6" lengthAdjust="spacingAndGlyphs" stroke="#3a3a3a" stroke-width="0.12">+A1</text>
<text x="607.6" y="515.2" font-size="2.6" fill="#3a3a3a" text-anchor="start" font-weight="normal" textLength="13" lengthAdjust="spacingAndGlyphs" stroke="#3a3a3a" stroke-width="0.12">Revision 1</text>
<text x="670.4" y="494.8" font-size="3.6" fill="#3a3a3a" text-anchor="start" font-weight="normal" textLength="11.6" lengthAdjust="spacingAndGlyphs" stroke="#3a3a3a" stroke-width="0.12">&amp;EFS1</text>
<text x="670.4" y="501.4" font-size="2.6" fill="#3a3a3a" text-anchor="start" font-weight="normal" textLength="40" lengthAdjust="spacingAndGlyphs" stroke="#3a3a3a" stroke-width="0.12">Revision engineering schematic</text>
<text x="670.4" y="508.4" font-size="3.6" fill="#3a3a3a" text-anchor="start" font-weight="normal" textLength="8" lengthAdjust="spacingAndGlyphs" stroke="#3a3a3a" stroke-width="0.12">Page</text>
<text x="729.6" y="508.4" font-size="3.6" fill="#3a3a3a" text-anchor="end" font-weight="normal" stroke="#3a3a3a" stroke-width="0.12">1</text>
<text x="670.4" y="515.8" font-size="3.6" fill="#3a3a3a" text-anchor="start" font-weight="normal" textLength="8" lengthAdjust="spacingAndGlyphs" stroke="#3a3a3a" stroke-width="0.12">Page</text>
<text x="697.6" y="515.8" font-size="3.6" fill="#3a3a3a" text-anchor="end" font-weight="normal" textLength="6.6" lengthAdjust="spacingAndGlyphs" stroke="#3a3a3a" stroke-width="0.12">261</text>
<text x="703.2" y="515.8" font-size="3.6" fill="#3a3a3a" text-anchor="start" font-weight="normal" textLength="8" lengthAdjust="spacingAndGlyphs" stroke="#3a3a3a" stroke-width="0.12">from</text>
<text x="729.6" y="515.8" font-size="3.6" fill="#3a3a3a" text-anchor="end" font-weight="normal" textLength="6.6" lengthAdjust="spacingAndGlyphs" stroke="#3a3a3a" stroke-width="0.12">305</text>
</svg>
<div id="dlg"></div>
<svg width="750" height="519" viewBox="0 0 750 519">
<path d="M343,140.3 A5,5 0 0 1 348,135.3 H738.2 A5,5 0 0 1 743.2,140.3 V154.8 H343 Z" fill="#0b0b0b"/>
<rect x="348.8" y="141" width="10.2" height="10.2" fill="#e8609a"/>
<rect x="350" y="142.2" width="3.8" height="3.2" fill="#f4c8dc"/><rect x="350.4" y="145.8" width="3.2" height="4.4" fill="#a8083e"/><rect x="354.4" y="142.6" width="3.4" height="7.6" fill="#cc0a44"/>
<text x="364.8" y="149.8" font-size="8.6" fill="#e6e6e6" stroke="#e6e6e6" stroke-width="0.18" text-anchor="start" textLength="52.4" lengthAdjust="spacingAndGlyphs">Check project *</text>
<path d="M724.6,139 L731,145.4 M731,139 L724.6,145.4" stroke="#e8e8e8" stroke-width="1.05"/>
<text x="359" y="178.2" font-size="8.4" fill="#e0e0e0" stroke="#e0e0e0" stroke-width="0.18" text-anchor="start" textLength="30" lengthAdjust="spacingAndGlyphs">Settings:</text>
<rect x="469.1" y="168.2" width="235" height="15.2" fill="#2c2c2c" stroke="#3e3e3e" stroke-width="1"/>
<rect x="692.6" y="168.7" width="11.5" height="14.2" fill="#3a3a3a"/>
<path d="M696.4,175 H700.6 L698.5,177.4 Z" fill="#e0e0e0"/>
<text x="471.2" y="179" font-size="8.4" fill="#e6e6e6" stroke="#e6e6e6" stroke-width="0.18" text-anchor="start" textLength="36.6" lengthAdjust="spacingAndGlyphs">[EES] Basic</text>
<rect x="710.4" y="168" width="16.4" height="14.4" fill="#262626" stroke="#3c3c3c" stroke-width="1"/>
<path d="M715.6,177.6 h1.3 M717.9,177.6 h1.3 M720.2,177.6 h1.3" stroke="#e0e0e0" stroke-width="1.2"/>
<rect x="360.8" y="197.8" width="5.8" height="5.8" fill="#2a2a2a" stroke="#505050" stroke-width="0.9"/>
<path d="M361.6,200.6 L363.2,202.4 L366,198.6" stroke="#f0f0f0" stroke-width="1.1" fill="none"/>
<rect x="368.4" y="195.8" width="79" height="10.5" fill="none" stroke="#7a7a7a" stroke-width="0.8"/>
<text x="369" y="204" font-size="8.6" fill="#e6e6e6" stroke="#e6e6e6" stroke-width="0.18" text-anchor="start" textLength="77.6" lengthAdjust="spacingAndGlyphs">Apply to entire project</text>
<rect x="360.8" y="221.8" width="5.8" height="5.8" fill="#2a2a2a" stroke="#505050" stroke-width="0.9"/>
<text x="369" y="227.8" font-size="8.6" fill="#e2e2e2" stroke="#e2e2e2" stroke-width="0.18" text-anchor="start" textLength="114" lengthAdjust="spacingAndGlyphs">Check only completed messages</text>
<rect x="554.4" y="240.4" width="81.2" height="16.8" fill="#2e2e2e" stroke="#4a4a4a" stroke-width="1"/>
<rect x="647.2" y="240.4" width="80.8" height="16.8" fill="#2e2e2e" stroke="#4a4a4a" stroke-width="1"/>
<text x="589.8" y="251.6" font-size="8.6" fill="#ececec" stroke="#ececec" stroke-width="0.18" text-anchor="start" textLength="10.8" lengthAdjust="spacingAndGlyphs">OK</text>
<text x="674.8" y="251.6" font-size="8.6" fill="#ececec" stroke="#ececec" stroke-width="0.18" text-anchor="start" textLength="24.4" lengthAdjust="spacingAndGlyphs">Cancel</text>
</svg>
</body></html>
